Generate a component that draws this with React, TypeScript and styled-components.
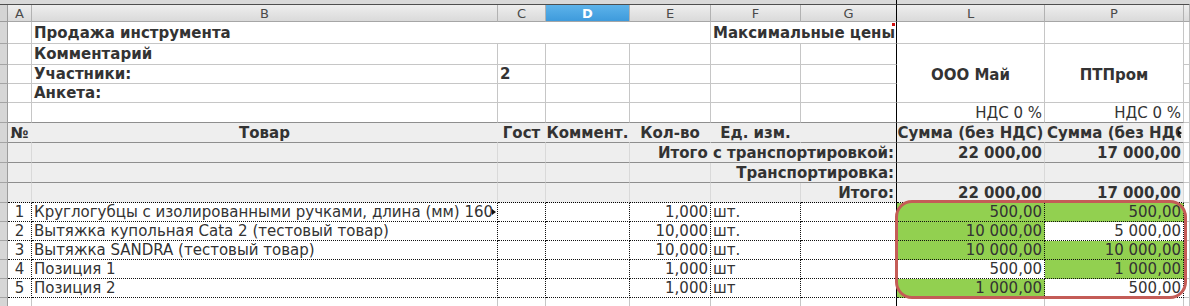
import React from "react";
import styled, { createGlobalStyle, css } from "styled-components";

const GlobalStyle = createGlobalStyle`
  html, body { margin: 0; padding: 0; background: #ffffff; }
  body {
    font-family: "DejaVu Sans", "Noto Sans", sans-serif;
    width: 1190px;
    height: 306px;
    overflow: hidden;
  }
`;

const COLS = [8, 24, 466, 48, 84, 81, 90, 96, 148, 139, 6];
const ROWS = [5, 17, 22, 21, 19, 19, 20, 20, 20, 20, 20, 19, 19, 19, 19, 19, 9];

const GRID = "#c6c6c6";
const BAND_LINE = "#8e8e8e";
const BAND_BG = "#eeeeee";
const GREEN = "#92d050";

const Sheet = styled.div`
  position: relative;
  display: grid;
  grid-template-columns: ${COLS.map((c) => `${c}px`).join(" ")};
  grid-template-rows: ${ROWS.map((r) => `${r}px`).join(" ")};
  width: 1190px;
  height: 306px;
  overflow: hidden;
  font-size: 15px;
  color: #333333;
`;

type Align = "left" | "center" | "right";

interface CellProps {
  $span?: number;
  $rows?: number;
  $align?: Align;
  $bold?: boolean;
  $frozen?: boolean;
}

const justify = (a?: Align) =>
  a === "right" ? "flex-end" : a === "center" ? "center" : "flex-start";

const cellBase = css<CellProps>`
  box-sizing: border-box;
  position: relative;
  grid-column: span ${(p) => p.$span ?? 1};
  grid-row: span ${(p) => p.$rows ?? 1};
  display: flex;
  align-items: center;
  justify-content: ${(p) => justify(p.$align)};
  padding: 0 2px;
  white-space: nowrap;
  overflow: hidden;
  font-weight: ${(p) => (p.$bold ? 700 : 400)};
`;

const TopBar = styled.div<CellProps>`
  ${cellBase};
  background: #d9d9d9;
  border-bottom: 1px solid #4e4e4e;
  border-right: 1px solid ${(p) => (p.$frozen ? "#000" : "#d9d9d9")};
`;

const Corner = styled.div`
  box-sizing: border-box;
  background: #d4d4d4;
  border-right: 1px solid #9c9c9c;
  border-bottom: 1px solid #9c9c9c;
`;

const ColHead = styled.div<CellProps & { $active?: boolean }>`
  ${cellBase};
  justify-content: center;
  font-size: 13px;
  color: #4a4a4a;
  background: linear-gradient(#eeeeee, #dadada);
  border-right: 1px solid ${(p) => (p.$frozen ? "#000" : "#b2b2b2")};
  border-bottom: 1px solid #a6a6a6;
  ${(p) =>
    p.$active &&
    css`
      background: linear-gradient(#5db3ea, #3e9bdc);
      color: #ffffff;
      font-weight: 700;
    `}
`;

const RowHead = styled.div`
  box-sizing: border-box;
  background: #d6d6d6;
  border-right: 1px solid #9c9c9c;
  border-bottom: 1px solid #a4a4a4;
`;

const Cell = styled.div<CellProps & { $bottom?: "band" }>`
  ${cellBase};
  background: #ffffff;
  border-right: 1px solid ${(p) => (p.$frozen ? "#000" : GRID)};
  border-bottom: 1px solid ${(p) => (p.$bottom === "band" ? BAND_LINE : GRID)};
`;

const SupplierCell = styled(Cell)`
  padding-top: 4px;
`;

const BandCell = styled.div<CellProps & { $head?: boolean; $last?: boolean }>`
  ${cellBase};
  background: ${BAND_BG};
  border-right: 1px solid
    ${(p) => (p.$frozen ? "#000" : p.$head ? BAND_BG : "#d9d9d9")};
  border-bottom: 1px ${(p) => (p.$last ? "dotted #000" : `solid ${BAND_LINE}`)};
`;

const DataCell = styled.div<CellProps & { $fill?: boolean }>`
  ${cellBase};
  background: ${(p) => (p.$fill ? GREEN : "#ffffff")};
  border-right: 1px ${(p) => (p.$frozen ? "solid #000" : "dotted #111")};
  border-bottom: 1px dotted #111;
`;

const ClipText = styled.span`
  display: block;
  flex: 1 1 auto;
  min-width: 0;
  overflow: hidden;
  padding-right: 3px;
`;

const ClipMark = styled.span`
  position: absolute;
  right: 1px;
  top: 50%;
  transform: translateY(-50%);
  width: 0;
  height: 0;
  border-left: 4px solid #111;
  border-top: 3px solid transparent;
  border-bottom: 3px solid transparent;
`;

const CommentMark = styled.span`
  position: absolute;
  right: 1px;
  top: 1px;
  width: 3px;
  height: 3px;
  background: #d01010;
`;

const Highlight = styled.div`
  position: absolute;
  left: 895px;
  top: 200px;
  width: 292px;
  height: 99px;
  box-sizing: border-box;
  border: 3px solid #c45c57;
  border-radius: 17px;
  pointer-events: none;
`;

const LETTERS = ["A", "B", "C", "D", "E", "F", "G", "L", "P", ""];

interface DataRow {
  n: string;
  name: string;
  qty: string;
  unit: string;
  l: string;
  lGreen: boolean;
  p: string;
  pGreen: boolean;
  clipped?: boolean;
}

const DATA: DataRow[] = [
  {
    n: "1",
    name: "Круглогубцы с изолированными ручками, длина (мм) 160",
    qty: "1,000",
    unit: "шт.",
    l: "500,00",
    lGreen: true,
    p: "500,00",
    pGreen: true,
    clipped: true,
  },
  {
    n: "2",
    name: "Вытяжка купольная Cata 2 (тестовый товар)",
    qty: "10,000",
    unit: "шт.",
    l: "10 000,00",
    lGreen: true,
    p: "5 000,00",
    pGreen: false,
  },
  {
    n: "3",
    name: "Вытяжка SANDRA (тестовый товар)",
    qty: "10,000",
    unit: "шт.",
    l: "10 000,00",
    lGreen: true,
    p: "10 000,00",
    pGreen: true,
  },
  {
    n: "4",
    name: "Позиция 1",
    qty: "1,000",
    unit: "шт",
    l: "500,00",
    lGreen: false,
    p: "1 000,00",
    pGreen: true,
  },
  {
    n: "5",
    name: "Позиция 2",
    qty: "1,000",
    unit: "шт",
    l: "1 000,00",
    lGreen: true,
    p: "500,00",
    pGreen: false,
  },
];

export default function App() {
  return (
    <>
      <GlobalStyle />
      <Sheet>
        {/* top strip */}
        <TopBar $span={8} $frozen />
        <TopBar $span={3} />

        {/* column headers */}
        <Corner />
        {LETTERS.map((l, i) => (
          <ColHead key={i} $active={l === "D"} $frozen={l === "G"}>
            {l}
          </ColHead>
        ))}

        {/* row 1 */}
        <RowHead />
        <Cell />
        <Cell $span={4} $bold>
          Продажа инструмента
        </Cell>
        <Cell $span={2} $bold $frozen>
          Максимальные цены
          <CommentMark />
        </Cell>
        <Cell />
        <Cell />
        <Cell />

        {/* row 2 */}
        <RowHead />
        <Cell />
        <Cell $bold>Комментарий</Cell>
        <Cell />
        <Cell />
        <Cell />
        <Cell />
        <Cell $frozen />
        <SupplierCell $rows={3} $align="center" $bold>
          ООО Май
        </SupplierCell>
        <SupplierCell $rows={3} $align="center" $bold>
          ПТПром
        </SupplierCell>
        <Cell />

        {/* row 3 */}
        <RowHead />
        <Cell />
        <Cell $bold>Участники:</Cell>
        <Cell $bold>2</Cell>
        <Cell />
        <Cell />
        <Cell />
        <Cell $frozen />
        <Cell />

        {/* row 4 */}
        <RowHead />
        <Cell />
        <Cell $bold>Анкета:</Cell>
        <Cell />
        <Cell />
        <Cell />
        <Cell />
        <Cell $frozen />
        <Cell />

        {/* row 5 */}
        <RowHead />
        <Cell $bottom="band" />
        <Cell $bottom="band" />
        <Cell $bottom="band" />
        <Cell $bottom="band" />
        <Cell $bottom="band" />
        <Cell $bottom="band" />
        <Cell $bottom="band" $frozen />
        <Cell $bottom="band" $align="right">
          НДС 0 %
        </Cell>
        <Cell $bottom="band" $align="right">
          НДС 0 %
        </Cell>
        <Cell />

        {/* row 6: table header */}
        <RowHead />
        <BandCell $head $bold $align="center">
          №
        </BandCell>
        <BandCell $head $bold $align="center">
          Товар
        </BandCell>
        <BandCell $head $bold $align="center">
          Гост
        </BandCell>
        <BandCell $head $bold $align="center">
          Коммент.
        </BandCell>
        <BandCell $head $bold $align="center">
          Кол-во
        </BandCell>
        <BandCell $head $bold $align="center">
          Ед. изм.
        </BandCell>
        <BandCell $head $frozen />
        <BandCell $head $bold $align="center">
          Сумма (без НДС)
        </BandCell>
        <BandCell $head $bold>
          <ClipText>Сумма (без НДС)</ClipText>
          <ClipMark />
        </BandCell>
        <Cell />

        {/* row 7 */}
        <RowHead />
        <BandCell />
        <BandCell />
        <BandCell />
        <BandCell />
        <BandCell $span={3} $frozen $bold $align="right">
          Итого с транспортировкой:
        </BandCell>
        <BandCell $bold $align="right">
          22 000,00
        </BandCell>
        <BandCell $bold $align="right">
          17 000,00
        </BandCell>
        <Cell />

        {/* row 8 */}
        <RowHead />
        <BandCell />
        <BandCell />
        <BandCell />
        <BandCell />
        <BandCell />
        <BandCell $span={2} $frozen $bold $align="right">
          Транспортировка:
        </BandCell>
        <BandCell />
        <BandCell />
        <Cell />

        {/* row 9 */}
        <RowHead />
        <BandCell $last />
        <BandCell $last />
        <BandCell $last />
        <BandCell $last />
        <BandCell $last />
        <BandCell $last />
        <BandCell $last $frozen $bold $align="right">
          Итого:
        </BandCell>
        <BandCell $last $bold $align="right">
          22 000,00
        </BandCell>
        <BandCell $last $bold $align="right">
          17 000,00
        </BandCell>
        <Cell />

        {/* data rows */}
        {DATA.map((r) => (
          <React.Fragment key={r.n}>
            <RowHead />
            <DataCell $align="center">{r.n}</DataCell>
            <DataCell>
              {r.clipped ? (
                <>
                  <ClipText>{r.name}</ClipText>
                  <ClipMark />
                </>
              ) : (
                r.name
              )}
            </DataCell>
            <DataCell />
            <DataCell />
            <DataCell $align="right">{r.qty}</DataCell>
            <DataCell>{r.unit}</DataCell>
            <DataCell $frozen />
            <DataCell $align="right" $fill={r.lGreen}>
              {r.l}
            </DataCell>
            <DataCell $align="right" $fill={r.pGreen}>
              {r.p}
            </DataCell>
            <Cell />
          </React.Fragment>
        ))}

        {/* partial last row */}
        <RowHead />
        <Cell />
        <Cell />
        <Cell />
        <Cell />
        <Cell />
        <Cell />
        <Cell $frozen />
        <Cell />
        <Cell />
        <Cell />

        <Highlight />
      </Sheet>
    </>
  );
}
